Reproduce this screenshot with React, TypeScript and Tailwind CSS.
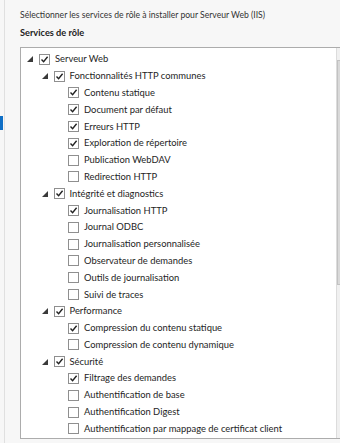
type RowT = {
  label: string
  level: number
  checked: boolean
  // Only parent nodes carry the expanded-arrow glyph.
  expanded?: boolean
}

const ROWS: RowT[] = [
  { label: 'Serveur Web', level: 0, checked: true, expanded: true },
  { label: 'Fonctionnalités HTTP communes', level: 1, checked: true, expanded: true },
  { label: 'Contenu statique', level: 2, checked: true },
  { label: 'Document par défaut', level: 2, checked: true },
  { label: 'Erreurs HTTP', level: 2, checked: true },
  { label: 'Exploration de répertoire', level: 2, checked: true },
  { label: 'Publication WebDAV', level: 2, checked: false },
  { label: 'Redirection HTTP', level: 2, checked: false },
  { label: 'Intégrité et diagnostics', level: 1, checked: true, expanded: true },
  { label: 'Journalisation HTTP', level: 2, checked: true },
  { label: 'Journal ODBC', level: 2, checked: false },
  { label: 'Journalisation personnalisée', level: 2, checked: false },
  { label: 'Observateur de demandes', level: 2, checked: false },
  { label: 'Outils de journalisation', level: 2, checked: false },
  { label: 'Suivi de traces', level: 2, checked: false },
  { label: 'Performance', level: 1, checked: true, expanded: true },
  { label: 'Compression du contenu statique', level: 2, checked: true },
  { label: 'Compression de contenu dynamique', level: 2, checked: false },
  { label: 'Sécurité', level: 1, checked: true, expanded: true },
  { label: 'Filtrage des demandes', level: 2, checked: true },
  { label: 'Authentification de base', level: 2, checked: false },
  { label: 'Authentification Digest', level: 2, checked: false },
  { label: 'Authentification par mappage de certificat client', level: 2, checked: false },
]

const INDENT = ['pl-0', 'pl-[14.5px]', 'pl-[29px]']

function ExpandedArrow() {
  return (
    <svg width="6" height="6" viewBox="0 0 6 6" className="block">
      <polygon points="6,0 6,6 0,6" fill="#3a3a3a" />
    </svg>
  )
}

function Checkbox({ checked }: { checked: boolean }) {
  return (
    <span className="flex h-[11px] w-[11px] shrink-0 items-center justify-center border border-[#8f8f8f] bg-white">
      {checked && (
        <svg width="9" height="9" viewBox="0 0 9 9" className="block">
          <path d="M1.5 4.6 L3.6 6.8 L7.6 1.8" fill="none" stroke="#222" strokeWidth="1.4" />
        </svg>
      )}
    </span>
  )
}

function TreeRow({ row }: { row: RowT }) {
  return (
    <div className={`flex h-[16.8px] items-center whitespace-nowrap ${INDENT[row.level]}`}>
      <span className="flex w-[18px] shrink-0 items-center pl-[6px]">
        {row.expanded && <ExpandedArrow />}
      </span>
      <Checkbox checked={row.checked} />
      <span className="pl-[5px] text-[#1e1e1e]">{row.label}</span>
    </div>
  )
}

// Only the left ~5px of the scrollbar is inside the frame; the rest is clipped.
function ScrollBar() {
  return (
    <div className="flex w-[13px] shrink-0 flex-col border-l border-[#dcdcdc] bg-[#f0f0f0]">
      <div className="flex h-[12px] items-center justify-center">
        <svg width="5" height="3" viewBox="0 0 5 3" className="block">
          <polygon points="0,3 2.5,0 5,3" fill="#606060" />
        </svg>
      </div>
      <div className="h-[225px] border border-[#c2c2c2] bg-[#d9d9d9]" />
      <div className="flex-1" />
      <div className="flex h-[12px] items-center justify-center">
        <svg width="5" height="3" viewBox="0 0 5 3" className="block">
          <polygon points="0,0 5,0 2.5,3" fill="#606060" />
        </svg>
      </div>
    </div>
  )
}

export default function App() {
  return (
    <div className="flex h-[443px] w-[340px] overflow-hidden bg-[#f7f7f7] font-['Lato',sans-serif] text-[9.4px] text-[#1e1e1e]">
      <div className="flex w-[5px] shrink-0 flex-col border-r border-[#e0e0e0]">
        <div className="h-[116px]" />
        <div className="h-[14px] w-[3px] bg-[#0f6fc6]" />
      </div>

      <div className="flex flex-col pl-[15px]">
        <div className="flex h-[26px] items-center pt-[4px] text-[8.6px] text-[#333]">
          Sélectionner les services de rôle à installer pour Serveur Web (IIS)
        </div>
        <div className="flex h-[14px] items-center text-[9.2px] font-bold text-[#222]">Services de rôle</div>

        <div className="mt-[7px] flex h-[392px] w-[330px] border border-[#acacac] bg-white">
          <div className="flex-1 overflow-hidden pt-[3px]">
            {ROWS.map((row) => (
              <TreeRow key={row.label} row={row} />
            ))}
          </div>
          <ScrollBar />
        </div>
      </div>
    </div>
  )
}
